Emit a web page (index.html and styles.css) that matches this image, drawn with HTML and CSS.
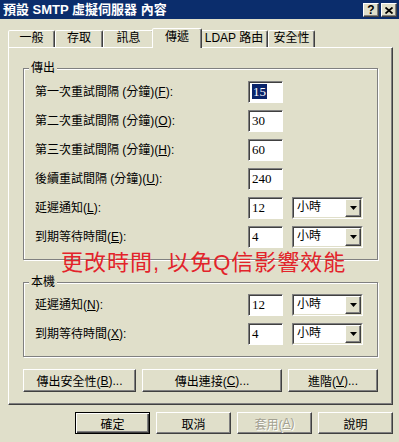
FILE: index.html
```html
<!DOCTYPE html>
<html lang="zh-Hant">
<head>
<meta charset="utf-8">
<title>預設 SMTP 虛擬伺服器 內容</title>
<link rel="stylesheet" href="styles.css">
</head>
<body>
<div class="window">
  <div class="titlebar">
    <span class="title">預設 SMTP 虛擬伺服器 內容</span>
    <div class="tbtns">
      <span class="tbtn help">?</span>
      <span class="tbtn close"><svg width="8" height="7" viewBox="0 0 8 7"><path d="M0.5 0.5 L7.5 6.5 M7.5 0.5 L0.5 6.5" stroke="#000" stroke-width="1.8" fill="none"/></svg></span>
    </div>
  </div>
  <div class="content">
    <div class="tabs">
      <div class="tab t1">一般</div>
      <div class="tab t2">存取</div>
      <div class="tab t3">訊息</div>
      <div class="tab active t4">傳遞</div>
      <div class="tab t5">LDAP 路由</div>
      <div class="tab t6">安全性</div>
    </div>
    <div class="panel">
      <div class="group g1">
        <span class="legend">傳出</span>
        <div class="rows">
          <span class="lbl">第一次重試間隔 (分鐘)(<u>F</u>):</span>
          <span class="field"><span class="sel">15</span></span>
          <span class="lbl">第二次重試間隔 (分鐘)(<u>O</u>):</span>
          <span class="field">30</span>
          <span class="lbl">第三次重試間隔 (分鐘)(<u>H</u>):</span>
          <span class="field">60</span>
          <span class="lbl">後續重試間隔 (分鐘)(<u>U</u>):</span>
          <span class="field">240</span>
          <span class="lbl">延遲通知(<u>L</u>):</span>
          <span class="field">12</span>
          <span class="combo"><span class="combo-inner"><span class="combo-text">小時</span><span class="combo-btn"><svg width="7" height="4" viewBox="0 0 7 4"><path d="M0 0 H7 L3.5 4 Z" fill="#000"/></svg></span></span></span>
          <span class="lbl">到期等待時間(<u>E</u>):</span>
          <span class="field">4</span>
          <span class="combo"><span class="combo-inner"><span class="combo-text">小時</span><span class="combo-btn"><svg width="7" height="4" viewBox="0 0 7 4"><path d="M0 0 H7 L3.5 4 Z" fill="#000"/></svg></span></span></span>
        </div>
      </div>
      <div class="group g2">
        <span class="legend">本機</span>
        <div class="rows">
          <span class="lbl">延遲通知(<u>N</u>):</span>
          <span class="field">12</span>
          <span class="combo"><span class="combo-inner"><span class="combo-text">小時</span><span class="combo-btn"><svg width="7" height="4" viewBox="0 0 7 4"><path d="M0 0 H7 L3.5 4 Z" fill="#000"/></svg></span></span></span>
          <span class="lbl">到期等待時間(<u>X</u>):</span>
          <span class="field">4</span>
          <span class="combo"><span class="combo-inner"><span class="combo-text">小時</span><span class="combo-btn"><svg width="7" height="4" viewBox="0 0 7 4"><path d="M0 0 H7 L3.5 4 Z" fill="#000"/></svg></span></span></span>
        </div>
      </div>
      <div class="btnrow">
        <span class="btn b-sec">傳出安全性(<u>B</u>)...</span>
        <span class="btn b-conn">傳出連接(<u>C</u>)...</span>
        <span class="btn b-adv">進階(<u>V</u>)...</span>
      </div>
    </div>
    <div class="footer">
      <span class="btn fbtn default">確定</span>
      <span class="btn fbtn">取消</span>
      <span class="btn fbtn disabled">套用(<u>A</u>)</span>
      <span class="btn fbtn">說明</span>
    </div>
  </div>
  <div class="note">更改時間, 以免Q信影響效能</div>
</div>
</body>
</html>
```

FILE: styles.css
```css
* { box-sizing: border-box; }

body {
  margin: 0;
  background: #e0dfca;
  font-family: "Liberation Sans", "Noto Sans CJK TC", sans-serif;
  font-size: 12px;
  color: #000;
}

.window {
  position: relative;
  width: 399px;
  height: 442px;
  background: #e0dfca;
  overflow: hidden;
}

.titlebar {
  height: 19px;
  background: #0b2d6c;
  display: flex;
  align-items: center;
  justify-content: space-between;
  padding: 0 2px 0 3px;
}

.title {
  color: #fff;
  font-weight: bold;
  font-size: 13px;
  line-height: 19px;
  white-space: nowrap;
}

.tbtns {
  display: flex;
  gap: 2px;
  margin-top: 1px;
}

.tbtn {
  width: 16px;
  height: 14px;
  background: #e0dfca;
  border: 1px solid;
  border-color: #fff #404040 #404040 #fff;
  box-shadow: inset -1px -1px #808080;
  display: flex;
  align-items: center;
  justify-content: center;
  font-weight: bold;
  font-size: 12px;
  line-height: 12px;
}

.content {
  padding: 9px 6px 0 8px;
}

.tabs {
  display: flex;
  align-items: flex-end;
  height: 19px;
  position: relative;
  z-index: 1;
}

.tab {
  height: 17px;
  border: 1px solid;
  border-bottom: none;
  border-color: #fff #404040 transparent #fff;
  box-shadow: inset -1px 0 #808080;
  border-radius: 2px 2px 0 0;
  background: #e0dfca;
  text-align: center;
  line-height: 15px;
  white-space: nowrap;
}

.t1 { width: 47px; }
.t2 { width: 48px; }
.t3 { width: 51px; }
.t5 { width: 68px; }
.t6 { width: 47px; }

.tab.active {
  width: 50px;
  height: 20px;
  margin: 0 -2px -1px;
  position: relative;
  z-index: 2;
  line-height: 17px;
}

.panel {
  border: 1px solid;
  border-color: #fff #404040 #404040 #fff;
  box-shadow: inset -1px -1px #808080;
  padding: 20px 14px 12px 14px;
}

.group {
  position: relative;
  border: 1px solid #808080;
  box-shadow: inset 1px 1px #fff, 1px 1px #fff;
  padding: 12px 10px 11px 11px;
}

.g2 {
  margin-top: 22px;
  padding-top: 11px;
}

.legend {
  position: absolute;
  top: -9px;
  left: 5px;
  padding: 0 2px;
  background: #e0dfca;
  line-height: 16px;
}

.rows {
  display: grid;
  grid-template-columns: 204px 35px 71px;
  column-gap: 9px;
  row-gap: 7px;
  grid-auto-rows: 22px;
  align-items: center;
}

.lbl {
  grid-column: 1;
  white-space: nowrap;
  line-height: 16px;
}

.field {
  grid-column: 2;
  height: 22px;
  border: 1px solid;
  border-color: #808080 #fff #fff #808080;
  box-shadow: inset 1px 1px #404040;
  background: #fff;
  padding: 3px 0 0 3px;
  font-family: "Liberation Serif", serif;
  font-size: 13px;
  line-height: 13px;
}

.sel {
  background: #0a246a;
  color: #fff;
  padding: 0 1px;
}

.combo {
  grid-column: 3;
  height: 22px;
  border: 1px solid;
  border-color: #808080 #fff #fff #808080;
}

.combo-inner {
  display: flex;
  height: 100%;
  border: 1px solid;
  border-color: #404040 #e0dfca #e0dfca #404040;
  background: #fff;
}

.combo-text {
  flex: 1;
  padding-left: 3px;
  line-height: 17px;
}

.combo-btn {
  width: 16px;
  background: #e0dfca;
  border: 1px solid;
  border-color: #fff #404040 #404040 #fff;
  box-shadow: inset -1px -1px #808080;
  display: flex;
  align-items: center;
  justify-content: center;
}

.btnrow {
  display: flex;
  gap: 6px;
  margin-top: 12px;
}

.btn {
  height: 23px;
  display: flex;
  align-items: center;
  justify-content: center;
  background: #e0dfca;
  border: 1px solid;
  border-color: #fff #404040 #404040 #fff;
  box-shadow: inset -1px -1px #808080;
  white-space: nowrap;
}

.b-sec { width: 113px; }
.b-conn { width: 140px; }
.b-adv { width: 90px; }

.footer {
  display: flex;
  justify-content: flex-end;
  gap: 6px;
  margin-top: 7px;
}

.fbtn {
  width: 75px;
  height: 22px;
}

.default {
  border-color: #000;
  box-shadow: inset 1px 1px #fff, inset -1px -1px #404040, inset -2px -2px #808080;
}

.disabled {
  color: #a3a192;
  text-shadow: 1px 1px #fff;
}

.note {
  position: absolute;
  left: 61px;
  top: 252px;
  color: #e3232a;
  font-size: 22px;
  line-height: 22px;
  letter-spacing: 1px;
  white-space: nowrap;
}
```
